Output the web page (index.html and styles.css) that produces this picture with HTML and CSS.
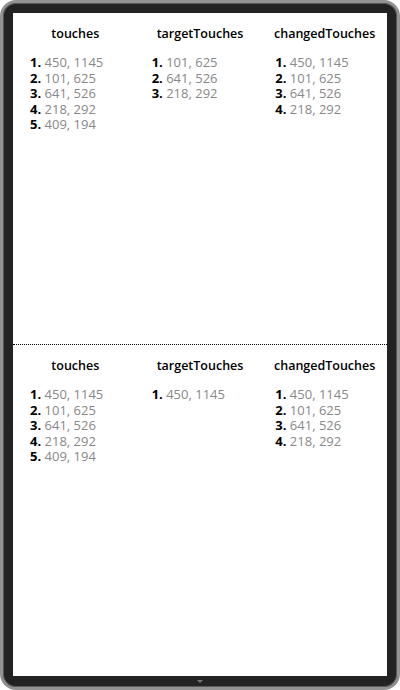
FILE: index.html
```html
<!DOCTYPE html>
<html>
<head>
<meta charset="utf-8">
<link rel="stylesheet" href="styles.css">
</head>
<body>
<div class="device">
  <div class="screen">
    <section class="pane">
      <div class="col">
        <h2 class="title">touches</h2>
        <ol class="list">
          <li><b>1.</b> 450, 1145</li>
          <li><b>2.</b> 101, 625</li>
          <li><b>3.</b> 641, 526</li>
          <li><b>4.</b> 218, 292</li>
          <li><b>5.</b> 409, 194</li>
        </ol>
      </div>
      <div class="col">
        <h2 class="title">targetTouches</h2>
        <ol class="list">
          <li><b>1.</b> 101, 625</li>
          <li><b>2.</b> 641, 526</li>
          <li><b>3.</b> 218, 292</li>
        </ol>
      </div>
      <div class="col">
        <h2 class="title">changedTouches</h2>
        <ol class="list">
          <li><b>1.</b> 450, 1145</li>
          <li><b>2.</b> 101, 625</li>
          <li><b>3.</b> 641, 526</li>
          <li><b>4.</b> 218, 292</li>
        </ol>
      </div>
    </section>
    <section class="pane pane-bottom">
      <div class="col">
        <h2 class="title">touches</h2>
        <ol class="list">
          <li><b>1.</b> 450, 1145</li>
          <li><b>2.</b> 101, 625</li>
          <li><b>3.</b> 641, 526</li>
          <li><b>4.</b> 218, 292</li>
          <li><b>5.</b> 409, 194</li>
        </ol>
      </div>
      <div class="col">
        <h2 class="title">targetTouches</h2>
        <ol class="list">
          <li><b>1.</b> 450, 1145</li>
        </ol>
      </div>
      <div class="col">
        <h2 class="title">changedTouches</h2>
        <ol class="list">
          <li><b>1.</b> 450, 1145</li>
          <li><b>2.</b> 101, 625</li>
          <li><b>3.</b> 641, 526</li>
          <li><b>4.</b> 218, 292</li>
        </ol>
      </div>
    </section>
  </div>
  <span class="home"></span>
</div>
</body>
</html>
```
FILE: styles.css
```css
html, body {
  margin: 0;
  padding: 0;
  background: #fff;
}
body {
  font-family: "Open Sans", "DejaVu Sans", sans-serif;
  font-size: 13px;
}
.device {
  position: relative;
  box-sizing: border-box;
  width: 400px;
  height: 690px;
  padding: 10px 10px 11px 10px;
  background: #222;
  border: 3px solid #929292;
  border-radius: 16px;
  box-shadow: inset 0 0 0 1px #5a5a5a;
}
.screen {
  height: 100%;
  background: #fff;
  display: flex;
  flex-direction: column;
}
.pane {
  flex: 1;
  display: grid;
  grid-template-columns: 1fr 1fr 1fr;
  align-content: start;
  padding-top: 13px;
}
.pane-bottom {
  border-top: 1px dotted #000;
}
.col {
  display: flex;
  flex-direction: column;
  min-width: 0;
}
.title {
  margin: 0;
  font-size: 12.5px;
  font-weight: 600;
  line-height: 16px;
  text-align: center;
  color: #000;
  white-space: nowrap;
}
.list {
  list-style: none;
  margin: 13px 0 0 0;
  padding: 0 0 0 17px;
  color: #888;
  line-height: 15.5px;
}
.col:nth-child(2) .list {
  padding-left: 14px;
}
.col:nth-child(3) .list {
  padding-left: 13px;
}
.list b {
  color: #000;
  font-weight: 700;
}
.home {
  position: absolute;
  left: 50%;
  bottom: 4px;
  margin-left: -3px;
  width: 0;
  height: 0;
  border-left: 3px solid transparent;
  border-right: 3px solid transparent;
  border-top: 3px solid #777;
}
```
